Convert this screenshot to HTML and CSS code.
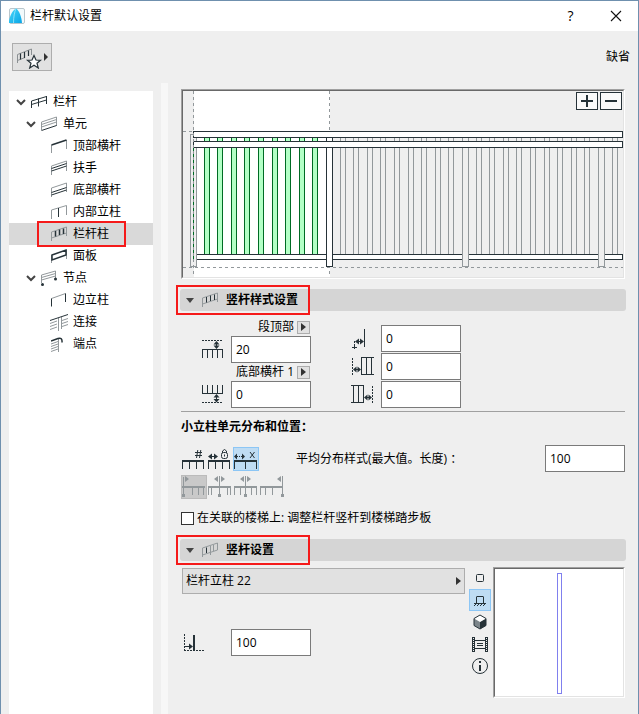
FILE: index.html
```html
<!DOCTYPE html>
<html lang="zh-CN">
<head>
<meta charset="utf-8">
<meta name="viewport" content="width=device-width, initial-scale=1">
<title>栏杆默认设置</title>
<link rel="stylesheet" href="styles.css">
</head>
<body>
<div class="window">
  <header class="titlebar">
    <svg class="app-logo" width="16" height="16" viewBox="0 0 16 16">
      <defs><linearGradient id="sail" x1="0" y1="0" x2="1" y2="1"><stop offset="0" stop-color="#45d6fa"/><stop offset="1" stop-color="#0aa5e6"/></linearGradient></defs>
      <rect x=".5" y=".5" width="15" height="15" rx="1.500" fill="#f2fafc" stroke="#b9c6cc"/>
      <path d="M0 15V13C1 7 4 2 7 .5C10.500 3 12.500 9 13 15Z" fill="url(#sail)"/>
      <path d="M4.500 15C4.500 9 5.500 4 7 .5" fill="none" stroke="#9feafc" stroke-width=".8"/>
    </svg>
    <h1 class="title">栏杆默认设置</h1>
    <button class="caption-button help" type="button">?</button>
    <button class="caption-button" type="button" aria-label="关闭"><svg width="12" height="12" viewBox="0 0 12 12"><path d="M1 1L11 11M11 1L1 11" stroke="#111" stroke-width="1.1"/></svg></button>
  </header>

  <div class="toolbar">
    <button class="favorites" type="button" aria-label="收藏夹">
      <svg width="36" height="24" viewBox="0 0 36 24" fill="none">
        <path d="M3.500 18V9.500L17.500 4V10M3.500 15.500L11 12.500" stroke="#8b9093"/>
        <path d="M6.500 8.500V14.500M10.500 7V13M14.500 5.500V11" stroke="#263238" stroke-width="1.200"/>
        <path d="M20 10.500L22 15L26.500 15.300L23 18.200L24.300 23L20 20.300L15.700 23L17 18.200L13.500 15.300L18 15Z" fill="#fff" stroke="#263238" stroke-width="1.200"/>
        <path d="M30 8L34 12L30 16Z" fill="#333"/>
      </svg>
    </button>
    <span>缺省</span>
  </div>

  <div class="content">
    <nav class="tree" aria-label="栏杆">
      <ul>
        <li>
          <button type="button" class="node level-1"><svg class="chevron" viewBox="0 0 10 10"><path d="M1 3L5 7L9 3"/></svg>
            <svg class="icon" viewBox="0 0 16 16"><path class="dark" d="M.5 7L15.500 2.500M.5 10.500L15.500 6"/><path class="dark" d="M.5 7V14M7.500 4.500V12.500M15.500 2V10"/></svg>栏杆</button>
          <ul>
            <li>
              <button type="button" class="node level-2"><svg class="chevron" viewBox="0 0 10 10"><path d="M1 3L5 7L9 3"/></svg>
                <svg class="icon" viewBox="0 0 16 16"><path class="gray" d="M.5 14V6L15.500 1V10M.5 8.500L15.500 3.500M.5 11L15.500 6"/><path class="dark" d="M.5 14.500L15.500 9.500"/></svg>单元</button>
              <ul>
                <li><button type="button" class="node level-3"><svg class="icon" viewBox="0 0 16 16"><path class="gray" d="M.5 7V15M15.500 2V11"/><path class="dark bold" d="M.5 7L15.500 2"/></svg>顶部横杆</button></li>
                <li><button type="button" class="node level-3"><svg class="icon" viewBox="0 0 16 16"><path class="gray" d="M.5 15V6L15.500 1V11"/><path class="dark" d="M.5 8.500L15.500 3.500M.5 11L15.500 6"/></svg>扶手</button></li>
                <li><button type="button" class="node level-3"><svg class="icon" viewBox="0 0 16 16"><path class="gray" d="M.5 15V6L15.500 1V10"/><path class="dark" d="M.5 10.500L15.500 5.500M.5 13L15.500 8"/></svg>底部横杆</button></li>
                <li><button type="button" class="node level-3"><svg class="icon" viewBox="0 0 16 16"><path class="gray" d="M.5 15V6L15.500 1.500V11"/><path class="dark" d="M7.500 4V13"/></svg>内部立柱</button></li>
                <li class="marked"><button type="button" class="node level-3 selected" aria-current="true"><svg class="icon" viewBox="0 0 16 16"><path class="gray" d="M.5 15V6L15.500 1V10M.5 12L15.500 7"/><path class="dark bold" d="M4.500 5V10.500M8.500 3.500V9M12.500 2.500V8"/></svg>栏杆柱</button></li>
                <li><button type="button" class="node level-3"><svg class="icon" viewBox="0 0 16 16"><path class="gray" d="M.5 7V15M15.500 2V11"/><path class="dark bold" d="M1 7L15 2V7L1 12Z"/></svg>面板</button></li>
              </ul>
            </li>
            <li>
              <button type="button" class="node level-2"><svg class="chevron" viewBox="0 0 10 10"><path d="M1 3L5 7L9 3"/></svg>
                <svg class="icon" viewBox="0 0 16 16"><path class="gray" d="M.5 13V5L14.500 1V9M.5 7.500L14.500 3.500M.5 10L14.500 6"/><circle class="dot" cx="1.500" cy="14.500" r="1.500"/><circle class="dot" cx="14.500" cy="9" r="1.500"/></svg>节点</button>
              <ul>
                <li><button type="button" class="node level-3"><svg class="icon" viewBox="0 0 16 16"><path class="gray" d="M.5 6.500L14.500 1.500"/><path class="dark" d="M.5 6.500V14.500M14.500 1.500V10"/></svg>边立柱</button></li>
                <li><button type="button" class="node level-3"><svg class="icon wide" viewBox="0 0 19 17"><path class="gray" d="M0 9.500L7 7M0 12.500L7 10M0 15.500L7 13M12 6.500L18 4.500M12 9.500L18 7.500M12 12.500L18 10.500M8.500 4V17M11.500 3V15"/><path class="dark" d="M0 6.500L18 .5"/></svg>连接</button></li>
                <li><button type="button" class="node level-3"><svg class="icon" viewBox="0 0 16 16"><path class="gray" d="M0 8L7 5.500M0 10.500L7 8M0 13L7 10.500M0 15.500L7 13M7.500 3V16"/><path class="dark bold" d="M0 5L7 2.500Q11.500 1 11 6.500"/></svg>端点</button></li>
              </ul>
            </li>
          </ul>
        </li>
      </ul>
    </nav>
    <div class="splitter"></div>

    <main class="settings">
      <div class="preview">
        <svg class="railing" viewBox="0 0 440 186" shape-rendering="crispEdges">
          <defs>
            <rect id="bar" x=".5" y="43.500" width="5" height="122"/>
            <rect id="post" x=".5" y="43.500" width="6" height="132"/>
          </defs>
          <rect x="11" width="136" height="186" fill="#fff"/>
          <path class="dashed" d="M146.500 0V186M0 40.500H11"/>
          <g class="active-bars"><use href="#bar" x="21"/><use href="#bar" x="34"/><use href="#bar" x="48"/><use href="#bar" x="61"/><use href="#bar" x="75"/><use href="#bar" x="89"/><use href="#bar" x="102"/><use href="#bar" x="116"/><use href="#bar" x="129"/></g>
          <g class="idle-bars"><use href="#bar" x="157"/><use href="#bar" x="170"/><use href="#bar" x="184"/><use href="#bar" x="197"/><use href="#bar" x="211"/><use href="#bar" x="225"/><use href="#bar" x="238"/><use href="#bar" x="252"/><use href="#bar" x="265"/><use href="#bar" x="293"/><use href="#bar" x="306"/><use href="#bar" x="320"/><use href="#bar" x="333"/><use href="#bar" x="347"/><use href="#bar" x="361"/><use href="#bar" x="374"/><use href="#bar" x="388"/><use href="#bar" x="401"/><use href="#bar" x="429"/></g>
          <rect class="rail" x="10.500" y="163.500" width="429" height="5"/>
          <path class="dashed" d="M0 176.500H440"/>
          <use class="idle-post" href="#post" x="7"/>
          <use class="rail" href="#post" x="143"/>
          <use class="idle-post" href="#post" x="279"/>
          <use class="idle-post" href="#post" x="415"/>
          <rect class="rail" x="10.500" y="40.500" width="429" height="6"/>
          <rect class="rail" x="10.500" y="50.500" width="429" height="6"/>
          <path d="M10.500 57V168" stroke="#006b24"/>
          <path class="dashed" d="M10.500 0V186"/>
        </svg>
        <div class="zoom-buttons">
          <button type="button" aria-label="放大"><svg width="12" height="12" viewBox="0 0 12 12"><path d="M0 6H12M6 0V12" stroke="#263238" stroke-width="2"/></svg></button>
          <button type="button" aria-label="缩小"><svg width="12" height="12" viewBox="0 0 12 12"><path d="M0 6H12" stroke="#263238" stroke-width="2"/></svg></button>
        </div>
      </div>

      <section>
        <h2 class="section-head"><button type="button" aria-expanded="true"><svg class="caret" viewBox="0 0 8 5"><path d="M0 0H8L4 5Z"/></svg>
          <svg class="icon" viewBox="0 0 16 16"><path class="gray" d="M.5 15V6L15.500 1V10M.5 12L15.500 7"/><path class="dark" d="M4.500 5V10.500M8.500 3.500V9M12.500 2.500V8"/></svg>竖杆样式设置</button></h2>
        <div class="offsets">
          <div class="offset-column">
            <div class="field-label"><label for="top">段顶部</label><button type="button" aria-label="段顶部选项"><svg viewBox="0 0 5 8"><path d="M0 0L5 4L0 8Z"/></svg></button></div>
            <svg class="tool" viewBox="0 0 24 20"><path class="dark crisp" stroke-dasharray="2 1" d="M0 .5H20"/><path class="dark crisp" d="M0 9.500H21M.5 10V18M5.500 10V18M10.500 10V18M15.500 10V18M20.500 10V18M14.500 3V8"/><path class="dot" d="M14.500 1L17.500 4.500H11.500ZM14.500 9L17.500 5.500H11.500Z"/></svg>
            <input id="top" type="text" value="20">
            <div class="field-label"><label for="bottom">底部横杆 1</label><button type="button" aria-label="底部横杆选项"><svg viewBox="0 0 5 8"><path d="M0 0L5 4L0 8Z"/></svg></button></div>
            <svg class="tool" viewBox="0 0 24 20"><path class="dark crisp" d="M0 8.500H21M.5 0V8M5.500 0V8M10.500 0V8M15.500 0V8M20.500 0V8M14.500 11V16"/><path class="dark crisp" stroke-dasharray="2 1" d="M0 17.500H20"/><path class="dot" d="M14.500 9L17.500 12.500H11.500ZM14.500 17.500L17.500 14H11.500Z"/></svg>
            <input id="bottom" type="text" value="0">
          </div>
          <div class="offset-column gaps">
            <svg class="tool" viewBox="0 0 24 20"><path class="dark crisp" d="M13.500 0V18M5 12.500H12M1 18.500H6M3.500 16V20"/><path class="dark crisp" stroke-dasharray="2 1" d="M3.500 12V16"/><path class="dot" d="M4 12.500L8 9.500V15.500ZM13 12.500L9 9.500V15.500Z"/></svg>
            <input type="text" value="0" aria-label="偏移">
            <svg class="tool" viewBox="0 0 24 20"><path class="dark crisp" stroke-dasharray="2 1" d="M1.500 1V18"/><path class="dark crisp" d="M10 .5H23M10 17.500H23M10.500 0V18M15.500 0V18M20.500 0V18M3 12.500H9"/><path class="dot" d="M2 12.500L5.500 9.500V15.500ZM10 12.500L6.500 9.500V15.500Z"/></svg>
            <input type="text" value="0" aria-label="起点间距">
            <svg class="tool" viewBox="0 0 24 20"><path class="dark crisp" stroke-dasharray="2 1" d="M21.500 1V18"/><path class="dark crisp" d="M0 .5H13M0 17.500H13M2.500 0V18M7.500 0V18M12.500 0V18M14 12.500H20"/><path class="dot" d="M13 12.500L16.500 9.500V15.500ZM21 12.500L17.500 9.500V15.500Z"/></svg>
            <input type="text" value="0" aria-label="终点间距">
          </div>
        </div>

        <h3 class="subhead">小立柱单元分布和位置<span class="colon">：</span></h3>
        <div class="distribution">
          <div class="tool-group">
            <button type="button" aria-label="数量"><svg viewBox="0 0 26 24"><path class="dark" d="M14 5.500H21M14 8.500H21M16.800 3L15.500 11M19.800 3L18.500 11"/><path class="dark comb" d="M1 14H23"/><path class="dark crisp" d="M1.500 14V22M8.500 14V22M15.500 14V22M22.500 14V22"/></svg></button>
            <button type="button" aria-label="固定间距"><svg viewBox="0 0 26 24"><path class="dark" d="M3 9.500H9"/><path class="dot" d="M1 9.500L5 6.500V12.500ZM11 9.500L7 6.500V12.500Z"/><rect class="dark" x="14.500" y="5.500" width="6" height="6" rx="2"/><path class="dark" d="M15.500 6V4Q17.500 1 19.500 4V6M17.500 7.500V9.500"/><path class="dark comb" d="M1 14H23"/><path class="dark crisp" d="M1.500 14V22M8.500 14V22M15.500 14V22M22.500 14V22"/></svg></button>
            <button type="button" class="pressed" aria-label="最大间距" aria-pressed="true"><svg viewBox="0 0 26 24"><path class="dark" stroke-dasharray="1 1" d="M4 9.500H9"/><path class="dot" d="M1 9.500L4 6.500V12.500ZM12 9.500L9 6.500V12.500Z"/><path class="dark" d="M17 5L21.500 11M21.500 5L17 11"/><path class="dark comb" d="M1 14H24"/><path class="dark crisp" d="M1.500 14V22M12.500 14V22M23.500 14V22"/></svg></button>
          </div>
          <label for="spacing">平均分布样式(最大值。长度) ：</label>
          <input id="spacing" type="text" value="100">
        </div>
        <div class="tool-group alignment">
          <button type="button" disabled class="pressed" aria-label="起点对齐"><svg viewBox="0 0 26 24"><path class="gray crisp" d="M2.500 2V20M11.500 12V20M17.500 12V20M22.500 12V20"/><path class="gray comb" d="M1 12H24"/><path class="gray-fill" d="M4 1V7L8 4ZM1 19h3v3h-3z"/></svg></button>
          <button type="button" disabled aria-label="居中对齐"><svg viewBox="0 0 26 24"><path class="gray crisp" d="M1.500 12V20M4.500 12V20M12.500 1V20M20.500 12V20M23.500 12V20"/><path class="gray comb" d="M1 12H24"/><path class="gray-fill" d="M11 1V7L7 4ZM14 1V7L18 4ZM11 19h3v3h-3z"/></svg></button>
          <button type="button" disabled aria-label="单元居中"><svg viewBox="0 0 26 24"><path class="gray crisp" d="M1.500 12V20M7.500 12V20M12.500 1V20M18.500 12V20M23.500 12V20"/><path class="gray comb" d="M1 12H24"/><path class="gray-fill" d="M11 1V7L7 4ZM14 1V7L18 4ZM11 19h3v3h-3z"/></svg></button>
          <button type="button" disabled aria-label="终点对齐"><svg viewBox="0 0 26 24"><path class="gray crisp" d="M1.500 12V20M6.500 12V20M13.500 12V20M23.500 1V20"/><path class="gray comb" d="M1 12H24"/><path class="gray-fill" d="M22 1V7L18 4ZM22 19h3v3h-3z"/></svg></button>
        </div>
        <label class="check"><input type="checkbox">在关联的楼梯上: 调整栏杆竖杆到楼梯踏步板</label>
      </section>

      <section>
        <h2 class="section-head"><button type="button" aria-expanded="true"><svg class="caret" viewBox="0 0 8 5"><path d="M0 0H8L4 5Z"/></svg>
          <svg class="icon" viewBox="0 0 16 16"><path class="gray" d="M.5 15V6L15.500 1V8L.5 13M8.500 4V13M11.500 3V9"/><path class="dark" d="M4.500 5.500V11"/></svg>竖杆设置</button></h2>
        <div class="component">
          <div class="component-main">
            <button type="button" class="picker">栏杆立柱 22<svg viewBox="0 0 5 8"><path d="M0 0L5 4L0 8Z"/></svg></button>
            <div class="width-field">
              <svg class="tool" viewBox="0 0 24 20"><path class="dark crisp" stroke-dasharray="2 1" d="M2.500 1V18M2 17.500H22"/><path class="dark crisp" d="M3 13.500H8"/><path class="dark bold2" d="M12 2V17"/><path class="dot" d="M11 13.500L7 10.500V16.500Z"/></svg>
              <input type="text" value="100" aria-label="宽度">
            </div>
          </div>
          <div class="views">
            <button type="button" aria-label="平面"><svg viewBox="0 0 22 22"><rect class="dark" x="7.500" y="7.500" width="7" height="7" rx="1"/></svg></button>
            <button type="button" class="pressed" aria-label="立面" aria-pressed="true"><svg viewBox="0 0 22 22"><path class="dark" d="M7.500 14V8Q7.500 7.500 8 7.500H14Q14.500 7.500 14.500 8V14M5 14.500H17"/><path class="dark" d="M5 17L7 15M8 17L10 15M11 17L13 15M14 17L16 15"/></svg></button>
            <button type="button" aria-label="三维"><svg viewBox="0 0 22 22"><path d="M11 4L17 7.500V14.500L11 18L5 14.500V7.500Z" fill="#7c858a"/><path d="M11 11L17 7.500V14.500L11 18Z" fill="#263238"/><path d="M11 4L17 7.500L11 11L5 7.500Z" fill="#fff"/><path class="dark" d="M11 4L17 7.500V14.500L11 18L5 14.500V7.500Z"/></svg></button>
            <button type="button" aria-label="预览图"><svg viewBox="0 0 22 22"><path class="dark crisp" d="M3.500 4V19M5.500 4V19M16.500 4V19M18.500 4V19M6 7.500H16M6 15.500H16M8 10.500H14M8 12.500H14"/><path class="dark" stroke-dasharray="1 1" d="M4.500 4V19M17.500 4V19"/></svg></button>
            <button type="button" aria-label="信息"><svg viewBox="0 0 22 22"><circle class="dark" cx="11" cy="11" r="7.500"/><path class="dark bold2" d="M11 10V16M11 6V8"/></svg></button>
          </div>
          <div class="preview part-preview"><svg viewBox="0 0 128 127" shape-rendering="crispEdges"><rect x="62.500" y="4.500" width="4" height="120" fill="#fff" stroke="#8080ee"/></svg></div>
        </div>
      </section>
    </main>
  </div>
</div>
</body>
</html>
```
FILE: styles.css
```css
*, *::after { box-sizing: border-box; }

body {
  margin: 0;
  color: #000;
  font: 12px/18px "Open Sans", "Noto Sans CJK SC", sans-serif;
}

h1, h2, h3, ul { margin: 0; padding: 0; font-size: inherit; list-style: none; }
button, input { font: inherit; color: inherit; }
button { margin: 0; padding: 0; border: 0; background: none; }
svg { display: block; flex: none; }

.window {
  display: flex;
  flex-direction: column;
  min-height: 100vh;
  background: #efefef;
  border: 1px solid #6f90ae;
  border-bottom: 0;
}

.titlebar {
  display: flex;
  align-items: center;
  height: 30px;
  padding-left: 8px;
  background: #fff;
}
.title { flex: 1; margin-left: 5px; font-weight: 400; }
.caption-button { display: grid; place-items: center; width: 45px; height: 30px; }
.help { font-size: 14px; }

.toolbar {
  display: flex;
  justify-content: space-between;
  align-items: center;
  height: 52px;
  padding: 0 8px 0 11px;
}
.favorites {
  display: grid;
  place-items: center;
  width: 40px;
  height: 28px;
  border: 1px solid #adadad;
  background: #e1e1e1;
}

/* shared line-art styles */
.dark, .gray { fill: none; stroke: #263238; }
.gray { stroke: #92989b; }
.dot { fill: #263238; }
.gray-fill { fill: #92989b; }
.bold { stroke-width: 1.5; }
.bold2, .comb { stroke-width: 2; }
.crisp { shape-rendering: crispEdges; }
.icon { width: 16px; height: 16px; }
.icon.wide { width: 19px; height: 17px; margin-left: -1px; }
.tool { width: 24px; height: 20px; }

.content { display: flex; flex: 1; }

.tree { width: 144px; margin: 8px 8px 0; background: #fff; }
.node {
  display: flex;
  align-items: center;
  width: 100%;
  height: 22px;
  text-align: left;
}
.node .icon { margin-right: 6px; }
.node .icon.wide { margin-right: 4px; }
.chevron { width: 10px; height: 10px; margin-right: 5px; fill: none; stroke: #444; stroke-width: 2; }
.level-1 { padding-left: 7px; }
.level-2 { padding-left: 17px; }
.level-3 { padding-left: 42px; }
.node.selected { background: #d9d9d9; }

.marked, .section-head { position: relative; }
.marked::after, .section-head::after {
  content: "";
  position: absolute;
  border: 2px solid #f51a1a;
  pointer-events: none;
}
.marked::after { inset: -2px 27px -2px 28px; }

.splitter { width: 7px; background: #f7f7f7; }

.settings { flex: 1; min-width: 0; margin: 6px 13px 16px; }

.preview {
  position: relative;
  border: 1px solid;
  border-color: #a0a0a0 #fff #fff #a0a0a0;
  background: #efefef;
}
.preview > svg {
  width: 100%;
  border: 1px solid;
  border-color: #696969 #e3e3e3 #e3e3e3 #696969;
}
.railing .dashed { fill: none; stroke: #92989b; stroke-dasharray: 3 3; }
.active-bars { fill: #b3ffc6; stroke: #006b24; }
.idle-bars { fill: none; stroke: #92989b; }
.rail { fill: #fff; stroke: #263238; }
.idle-post { fill: #efefef; stroke: #92989b; }
.zoom-buttons { position: absolute; top: 2px; right: 2px; display: flex; gap: 2px; }
.zoom-buttons button {
  display: grid;
  place-items: center;
  width: 22px;
  height: 18px;
  border: 1px solid #263238;
  background: #fafafa;
}

.section-head { margin: 10px -1px 0; }
.section-head button {
  display: flex;
  align-items: center;
  width: 100%;
  height: 22px;
  padding-left: 6px;
  border-radius: 3px;
  background: #d5d5d5;
  font-weight: 700;
}
.section-head::after { top: -4px; left: -4px; width: 134px; height: 30px; }
.caret { width: 8px; height: 5px; margin-right: 8px; fill: #444; }
.section-head .icon { margin-right: 8px; }

input[type="text"] {
  width: 80px;
  height: 27px;
  padding: 0 4px;
  border: 1px solid #7a7a7a;
  border-radius: 0;
  background: #fff;
}

.offsets {
  display: flex;
  gap: 40px;
  padding: 7px 0 3px 21px;
  border-bottom: 1px solid #a0a0a0;
}
.offset-column {
  display: grid;
  grid-template-columns: 29px 80px;
  align-content: start;
  align-items: center;
}
.gaps { grid-template-columns: 30px 80px; row-gap: 1px; padding-top: 7px; }
.field-label {
  grid-column: 1 / -1;
  display: flex;
  justify-content: flex-end;
  align-items: center;
  gap: 3px;
  height: 18px;
  padding-right: 1px;
}
.field-label button {
  display: grid;
  place-items: center;
  width: 13px;
  height: 13px;
  border: 1px solid #adadad;
  background: #e1e1e1;
}
.field-label svg, .picker svg { width: 5px; height: 8px; fill: #333; }

.subhead { padding: 6px 0 9px; font-weight: 700; }
.colon { font-family: "Noto Sans CJK TC", sans-serif; line-height: 1; }
.distribution { display: flex; align-items: center; }
.distribution label { flex: 1; margin-left: 37px; }
.tool-group { display: flex; }
.tool-group button { width: 26px; height: 24px; }
.tool-group svg { width: 26px; height: 24px; }
.pressed { background: #bfdcf3; box-shadow: inset 0 0 0 1px #8cc6f5; }
.alignment { margin-top: 3px; }
.alignment .pressed { background: #c9c9c9; box-shadow: inset 0 0 0 1px #bbb; }

.check { display: flex; align-items: center; gap: 3px; margin: 10px 0 12px; }
.check input {
  appearance: none;
  width: 13px;
  height: 13px;
  margin: 0;
  border: 1px solid #333;
  background: #fff;
}

.component { display: flex; padding-top: 6px; }
.component-main { flex: 1; padding: 1px 4px 0 1px; }
.picker {
  display: flex;
  justify-content: space-between;
  align-items: center;
  width: 100%;
  height: 26px;
  padding: 0 3px;
  border: 1px solid #adadad;
  background: #e1e1e1;
}
.width-field { display: flex; align-items: center; gap: 25px; margin-top: 35px; }
.views { display: flex; flex-direction: column; margin-right: 2px; }
.views button, .views svg { width: 22px; height: 22px; }
.part-preview { align-self: flex-start; width: 132px; background: #fff; }
```
